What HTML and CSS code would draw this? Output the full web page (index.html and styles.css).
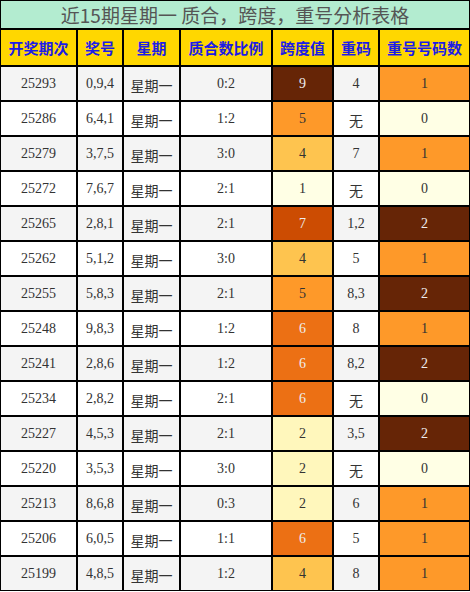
FILE: index.html
```html
<!DOCTYPE html>
<html lang="zh-CN">
<head>
<meta charset="utf-8">
<title>近15期星期一 质合，跨度，重号分析表格</title>
<link rel="stylesheet" href="styles.css">
</head>
<body>
<table class="grid">
  <colgroup>
    <col class="c1"><col class="c2"><col class="c3"><col class="c4"><col class="c5"><col class="c6"><col class="c7">
  </colgroup>
  <thead>
    <tr class="title-row"><th colspan="7" class="title">近15期星期一 质合，跨度，重号分析表格</th></tr>
    <tr class="head-row">
      <th>开奖期次</th><th>奖号</th><th>星期</th><th>质合数比例</th><th>跨度值</th><th>重码</th><th>重号号码数</th>
    </tr>
  </thead>
  <tbody>
    <tr class="odd"><td>25293</td><td>0,9,4</td><td class="cn">星期一</td><td>0:2</td><td class="s9">9</td><td>4</td><td class="r1">1</td></tr>
    <tr><td>25286</td><td>6,4,1</td><td class="cn">星期一</td><td>1:2</td><td class="s5">5</td><td class="cn">无</td><td class="r0">0</td></tr>
    <tr class="odd"><td>25279</td><td>3,7,5</td><td class="cn">星期一</td><td>3:0</td><td class="s4">4</td><td>7</td><td class="r1">1</td></tr>
    <tr><td>25272</td><td>7,6,7</td><td class="cn">星期一</td><td>2:1</td><td class="s1">1</td><td class="cn">无</td><td class="r0">0</td></tr>
    <tr class="odd"><td>25265</td><td>2,8,1</td><td class="cn">星期一</td><td>2:1</td><td class="s7">7</td><td>1,2</td><td class="r2">2</td></tr>
    <tr><td>25262</td><td>5,1,2</td><td class="cn">星期一</td><td>3:0</td><td class="s4">4</td><td>5</td><td class="r1">1</td></tr>
    <tr class="odd"><td>25255</td><td>5,8,3</td><td class="cn">星期一</td><td>2:1</td><td class="s5">5</td><td>8,3</td><td class="r2">2</td></tr>
    <tr><td>25248</td><td>9,8,3</td><td class="cn">星期一</td><td>1:2</td><td class="s6">6</td><td>8</td><td class="r1">1</td></tr>
    <tr class="odd"><td>25241</td><td>2,8,6</td><td class="cn">星期一</td><td>1:2</td><td class="s6">6</td><td>8,2</td><td class="r2">2</td></tr>
    <tr><td>25234</td><td>2,8,2</td><td class="cn">星期一</td><td>2:1</td><td class="s6">6</td><td class="cn">无</td><td class="r0">0</td></tr>
    <tr class="odd"><td>25227</td><td>4,5,3</td><td class="cn">星期一</td><td>2:1</td><td class="s2">2</td><td>3,5</td><td class="r2">2</td></tr>
    <tr><td>25220</td><td>3,5,3</td><td class="cn">星期一</td><td>3:0</td><td class="s2">2</td><td class="cn">无</td><td class="r0">0</td></tr>
    <tr class="odd"><td>25213</td><td>8,6,8</td><td class="cn">星期一</td><td>0:3</td><td class="s2">2</td><td>6</td><td class="r1">1</td></tr>
    <tr><td>25206</td><td>6,0,5</td><td class="cn">星期一</td><td>1:1</td><td class="s6">6</td><td>5</td><td class="r1">1</td></tr>
    <tr class="odd"><td>25199</td><td>4,8,5</td><td class="cn">星期一</td><td>1:2</td><td class="s4">4</td><td>8</td><td class="r1">1</td></tr>
  </tbody>
</table>
</body>
</html>
```
FILE: styles.css
```css
html, body {
  margin: 0;
  padding: 0;
  background: #ffffff;
}

.grid {
  width: 470px;
  table-layout: fixed;
  border-collapse: separate;
  border-spacing: 0;
  font-family: "Liberation Serif", "Noto Sans CJK SC", serif;
  font-size: 14px;
  color: #333333;
}

.c1 { width: 77px; }
.c2 { width: 46px; }
.c3 { width: 57px; }
.c4 { width: 92px; }
.c5 { width: 61px; }
.c6 { width: 46px; }
.c7 { width: 91px; }

.grid th,
.grid td {
  box-sizing: border-box;
  border: 1px solid #000000;
  padding: 0;
  text-align: center;
  vertical-align: middle;
}

.title {
  height: 29px;
  background: #b3ecd0;
  color: #555555;
  font-family: "Noto Sans CJK SC", sans-serif;
  font-size: 19px;
  font-weight: normal;
  line-height: 26px;
}

.head-row th {
  height: 37px;
  background: #ffd700;
  color: #1c1ce6;
  font-family: "Noto Sans CJK SC", sans-serif;
  font-size: 15px;
  font-weight: bold;
}

.grid td {
  height: 35px;
  background: #ffffff;
}

.grid tr.odd td {
  background: #f4f4f4;
}

.grid td.cn {
  font-family: "Noto Sans CJK SC", sans-serif;
  padding-top: 3px;
}

.grid tr td.s9 { background: #662506; color: #eeeeee; }
.grid tr td.s7 { background: #cc4c02; color: #eeeeee; }
.grid tr td.s6 { background: #ec7014; color: #eeeeee; }
.grid tr td.s5 { background: #fe9929; color: #333333; }
.grid tr td.s4 { background: #fec44f; color: #333333; }
.grid tr td.s2 { background: #fff7bc; color: #333333; }
.grid tr td.s1 { background: #ffffe5; color: #333333; }

.grid tr td.r0 { background: #ffffe5; color: #333333; }
.grid tr td.r1 { background: #fe9929; color: #333333; }
.grid tr td.r2 { background: #662506; color: #eeeeee; }
```
